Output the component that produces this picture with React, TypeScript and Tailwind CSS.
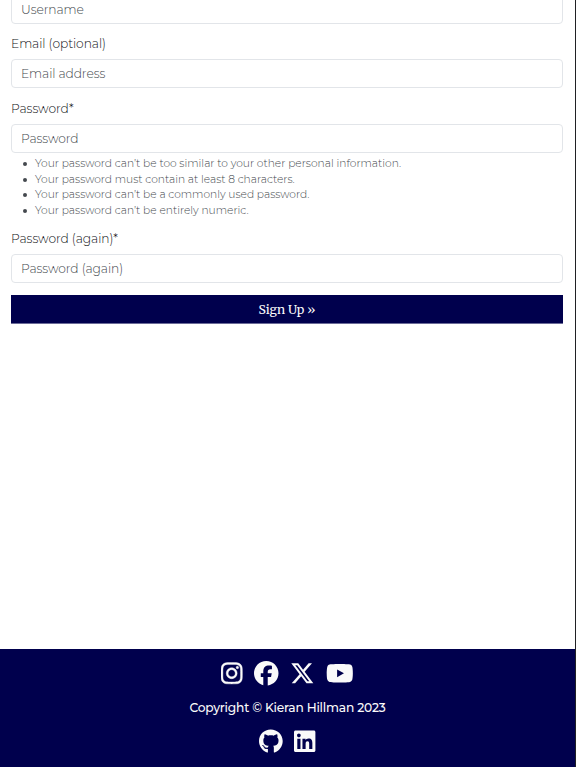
import React from "react";
import { FaInstagram, FaFacebook, FaXTwitter, FaYoutube, FaGithub, FaLinkedin } from "react-icons/fa6";

const inputClass =
  "block h-[28.5px] w-full rounded-[4px] border border-[#e2e5e9] bg-white px-[9px] text-[12.25px] tracking-[-0.08px] font-light text-[#212529] outline-none placeholder:text-[#44494e] placeholder:opacity-100";
const labelClass = "block h-[18px] text-[12.25px] leading-[18px] tracking-[-0.06px] font-light text-[#101214]";

const rules = [
  "Your password can’t be too similar to your other personal information.",
  "Your password must contain at least 8 characters.",
  "Your password can’t be a commonly used password.",
  "Your password can’t be entirely numeric.",
];

export default function App() {
  return (
    <div className="flex h-[767px] w-[576px] flex-col overflow-hidden border-r border-[#202124] bg-white font-['Montserrat','Inter',sans-serif]">
      <form className="flex flex-col pr-3 pl-[11px]">
        <input className={`${inputClass} -mt-[5px]`} placeholder="Username" />
        <label className={`${labelClass} mt-[11.5px]`}>Email (optional)</label>
        <input className={`${inputClass} mt-[6px] pt-px`} placeholder="Email address" />
        <label className={`${labelClass} mt-[12.5px]`}>Password*</label>
        <input className={`${inputClass} mt-[6px]`} placeholder="Password" />
        <ul className="mt-[3.5px] text-[10.67px] leading-[15.7px] font-light text-[#44494e]">
          {rules.map((rule) => (
            <li key={rule} className="flex items-center gap-2 pl-3">
              <span className="size-1 rounded-full bg-[#44494e]" />
              <span>{rule}</span>
            </li>
          ))}
        </ul>
        <label className={`${labelClass} mt-[11.2px]`}>Password (again)*</label>
        <input className={`${inputClass} mt-[6px] pt-px`} placeholder="Password (again)" />
        <button
          type="button"
          className="mt-[12px] h-[29px] w-full border-b border-[#6b6b98] bg-[#00004d] pt-[3px] font-['Merriweather','DejaVu_Serif_Condensed','DejaVu_Serif',serif] text-[12.25px] tracking-[-0.05px] text-[#fafafa]"
        >
          Sign Up »
        </button>
      </form>
      <footer className="mt-auto flex h-[118px] flex-col items-center bg-[#00004d] text-[#fafafa]">
        <div className="mt-[12px] flex items-center gap-[11.6px] text-[24.5px]">
          <FaInstagram className="w-[21.4px]" stroke="currentColor" strokeWidth="8" />
          <FaFacebook />
          <FaXTwitter />
          <FaYoutube className="w-[27.6px]" />
        </div>
        <p className="mt-[13px] text-[12.25px] leading-[18px] font-medium tracking-[-0.2px]">Copyright © Kieran Hillman 2023</p>
        <div className="mt-[12px] flex items-center gap-[11.6px] text-[24.5px]">
          <FaGithub className="w-[23.7px]" />
          <FaLinkedin className="w-[21.4px]" />
        </div>
      </footer>
    </div>
  );
}
